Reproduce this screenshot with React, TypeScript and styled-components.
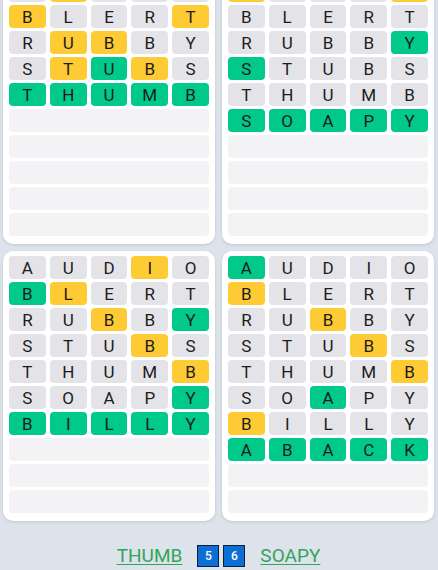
import React from "react";
import styled, {createGlobalStyle} from "styled-components";

type State = "correct" | "present" | "absent";

const GUESSES = ["AUDIO", "BLERT", "RUBBY", "STUBS", "THUMB", "SOAPY", "BILLY", "ABACK"];
const ANSWERS = ["THUMB", "SOAPY", "BILLY", "ABACK"];
const ROWS = 10;

const score = (guess: string, answer: string): State[] => {
  const result: State[] = Array(5).fill("absent");
  const left = answer.split("");
  guess.split("").forEach((ch, i) => {
    if (answer[i] === ch) {
      result[i] = "correct";
      left[i] = "";
    }
  });
  guess.split("").forEach((ch, i) => {
    if (result[i] === "correct") return;
    const idx = left.indexOf(ch);
    if (idx >= 0) {
      result[i] = "present";
      left[idx] = "";
    }
  });
  return result;
};

const tileColors: Record<State, string> = {
  correct: "#00c98a",
  present: "#ffcb35",
  absent: "#e4e4e8",
};

const GlobalStyle = createGlobalStyle`
  body {
    margin: 0;
    background: #dde3ea;
    font-family: Roboto, "Liberation Sans", sans-serif;
    overflow: hidden;
  }
`;

const Page = styled.div`
  padding: 0 4px 0 3px;
`;

const Board = styled.div`
  display: grid;
  grid-template-columns: 1fr 1fr;
  gap: 7px;
  margin-top: -26px;
`;

const Card = styled.div`
  display: flex;
  flex-direction: column;
  gap: 3px;
  padding: 5px 6px 8px;
  background: #fff;
  border-radius: 10px;
  box-shadow: 0 1px 3px rgba(60, 70, 90, 0.18);
`;

const Row = styled.div`
  display: grid;
  grid-template-columns: repeat(5, 1fr);
  gap: 4px;
  height: 23px;
`;

const Tile = styled.div<{ $state: State }>`
  display: flex;
  align-items: center;
  justify-content: center;
  border-radius: 4px;
  background: ${p => tileColors[p.$state]};
  color: #1c1c1c;
  font-size: 17px;
`;

const EmptyRow = styled.div`
  height: 23px;
  border-radius: 4px;
  background: #f3f3f6;
`;

const Footer = styled.div`
  display: flex;
  justify-content: center;
  align-items: center;
  margin-top: 23px;
`;

const Word = styled.a`
  color: #34a35b;
  font-size: 19px;
  text-decoration: underline;
  text-underline-offset: 2px;
  text-decoration-thickness: 1px;
`;

const Badges = styled.div`
  display: flex;
  gap: 4px;
  margin: 0 15px;
`;

const Badge = styled.div`
  width: 22px;
  height: 22px;
  box-sizing: border-box;
  display: flex;
  align-items: center;
  justify-content: center;
  background: #0b6fd6;
  border: 1.5px solid #0f1f33;
  color: #fff;
  font-size: 12px;
  font-weight: 500;
`;

const Grid: React.FC<{ answer: string }> = ({answer}) => {
  const solvedAt = GUESSES.indexOf(answer);
  const shown = GUESSES.slice(0, solvedAt + 1);
  return (
    <Card>
      {shown.map(guess => (
        <Row key={guess}>
          {score(guess, answer).map((state, i) => (
            <Tile key={i} $state={state}>{guess[i]}</Tile>
          ))}
        </Row>
      ))}
      {Array.from({length: ROWS - shown.length}).map((_, i) => (
        <EmptyRow key={i}/>
      ))}
    </Card>
  );
};

const App: React.FC = () => (
  <Page>
    <GlobalStyle/>
    <Board>
      {ANSWERS.map(answer => <Grid key={answer} answer={answer}/>)}
    </Board>
    <Footer>
      <Word>THUMB</Word>
      <Badges>
        <Badge>5</Badge>
        <Badge>6</Badge>
      </Badges>
      <Word>SOAPY</Word>
    </Footer>
  </Page>
);

export default App;
